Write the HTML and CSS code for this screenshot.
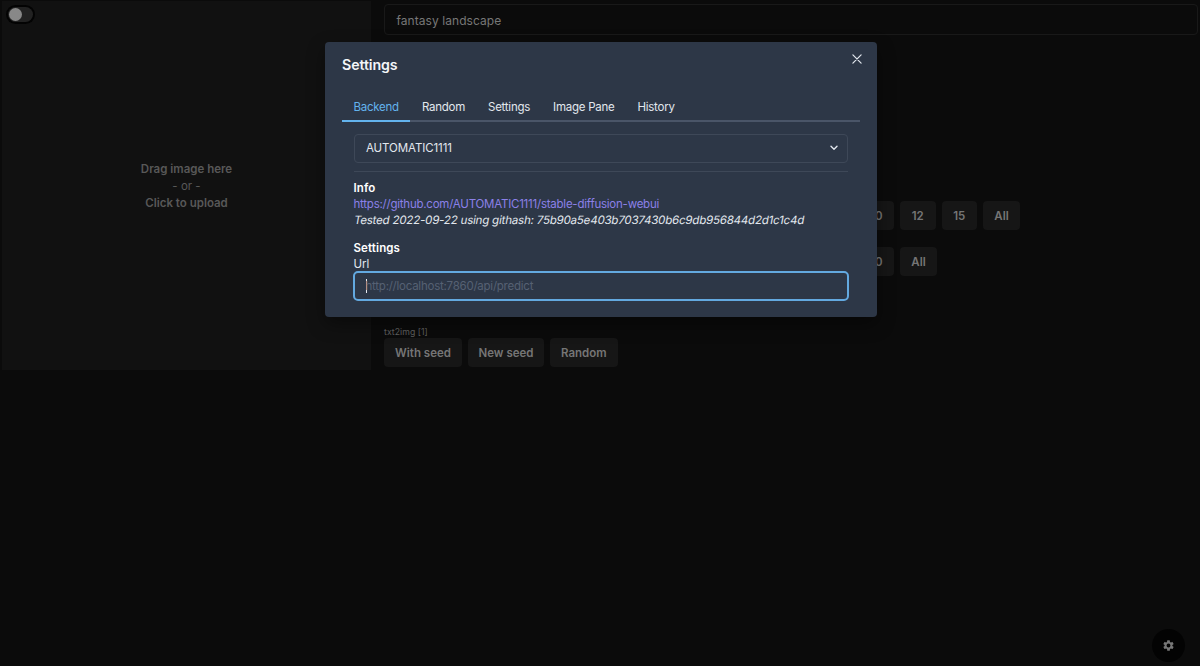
FILE: index.html
```html
<!DOCTYPE html>
<html lang="en">
<head>
<meta charset="utf-8">
<title>Settings</title>
<link rel="stylesheet" href="styles.css">
</head>
<body>
<div class="app">
  <section class="dropzone">
    <div class="switch"><span class="track"><span class="thumb"></span></span></div>
    <strong>Drag image here</strong>
    <span class="or">- or -</span>
    <strong>Click to upload</strong>
  </section>
  <main class="controls">
    <div class="prompt">fantasy landscape</div>
    <div class="row row-steps"><button class="btn num">10</button><button class="btn num">12</button><button class="btn num">15</button><button class="btn all">All</button></div>
    <div class="row row-scale"><button class="btn num">10</button><button class="btn all">All</button></div>
    <div class="caption">txt2img [1]</div>
    <div class="row row-run"><button class="btn seed">With seed</button><button class="btn new">New seed</button><button class="btn rand">Random</button></div>
  </main>
</div>
<div class="gear">
  <svg viewBox="0 0 24 24" width="13" height="13"><path fill="currentColor" d="M19.14 12.94c.04-.3.06-.61.06-.94s-.02-.64-.07-.94l2.03-1.58a.49.49 0 0 0 .12-.61l-1.92-3.32a.49.49 0 0 0-.59-.22l-2.39.96a7 7 0 0 0-1.62-.94l-.36-2.54a.48.48 0 0 0-.48-.41h-3.84a.48.48 0 0 0-.47.41l-.36 2.54c-.59.24-1.13.57-1.62.94l-2.39-.96a.48.48 0 0 0-.59.22L2.74 8.87a.48.48 0 0 0 .12.61l2.03 1.58a6 6 0 0 0 0 1.88l-2.03 1.58a.49.49 0 0 0-.12.61l1.92 3.32c.12.22.37.29.59.22l2.39-.96c.5.38 1.03.7 1.62.94l.36 2.54c.05.24.24.41.48.41h3.84c.24 0 .44-.17.47-.41l.36-2.54c.59-.24 1.13-.56 1.62-.94l2.39.96c.22.08.47 0 .59-.22l1.92-3.32a.48.48 0 0 0-.12-.61zM12 15.6a3.6 3.6 0 1 1 0-7.2 3.6 3.6 0 0 1 0 7.2z"/></svg>
</div>
<div class="modal">
  <header class="modal-head">
    <h1>Settings</h1>
    <svg class="close" viewBox="0 0 10 10" width="10" height="10"><path d="M.9.9l8.2 8.2M9.1.9L.9 9.1" stroke="currentColor" stroke-width="1.2" stroke-linecap="round"/></svg>
  </header>
  <nav class="tabs">
    <span class="tab active">Backend</span><span class="tab">Random</span><span class="tab">Settings</span><span class="tab">Image Pane</span><span class="tab">History</span>
  </nav>
  <div class="panel">
    <div class="select"><span>AUTOMATIC1111</span><svg viewBox="0 0 8 6" width="8" height="6"><path d="M1 1.3l3 3 3-3" fill="none" stroke="currentColor" stroke-width="1.4" stroke-linecap="round" stroke-linejoin="round"/></svg></div>
    <hr class="divider">
    <h2>Info</h2>
    <a class="link">https://github.com/AUTOMATIC1111/stable-diffusion-webui</a>
    <em class="tested">Tested 2022-09-22 using githash: 75b90a5e403b7037430b6c9db956844d2d1c1c4d</em>
    <h2 class="second">Settings</h2>
    <label class="label">Url</label>
    <div class="input"><span class="caret"></span><span>http://localhost:7860/api/predict</span></div>
  </div>
</div>
</body>
</html>
```
FILE: styles.css
```css
* { box-sizing: border-box; }
body {
  margin: 0;
  width: 1200px;
  height: 666px;
  overflow: hidden;
  background: #0b0b0b;
  color: #707070;
  font: 11.5px/17px Inter, "Liberation Sans", sans-serif;
}
.app { display: flex; gap: 13px; padding: 1px 2px; }
.dropzone {
  position: relative;
  width: 369px;
  height: 369px;
  padding-top: 2px;
  flex: none;
  display: flex;
  flex-direction: column;
  align-items: center;
  justify-content: center;
  background: #111;
  color: #585858;
}
.dropzone strong { font-weight: 600; }
.dropzone .or { line-height: 17px; }
.switch {
  position: absolute;
  left: 4px;
  top: 4px;
  padding: 2px;
  border-radius: 10px;
  background: #030303;
}
.track { display: flex; width: 25px; height: 15px; padding: 1px; border-radius: 8px; background: #222; }
.thumb { width: 13px; height: 13px; border-radius: 50%; background: #888; }
.controls { flex: 1; padding-top: 3px; }
.prompt {
  height: 31px;
  padding: 0 11.5px;
  border: 1px solid #191919;
  border-radius: 4px;
  color: #777;
  font-size: 12px;
  letter-spacing: .06px;
  line-height: 31px;
}
.row { display: flex; gap: 6px; }
.row-steps { margin: 166px 0 17px 474.5px; }
.row-scale { margin: 0 0 49px 474.5px; }
.btn {
  height: 29px;
  padding: 1px 0 0;
  border: 0;
  border-radius: 4px;
  background: #161616;
  color: #757575;
  font: 600 11.5px/28px Inter, sans-serif;
}
.num { width: 35.5px; }
.all { width: 37px; }
.seed { width: 78px; }
.new { width: 76px; }
.rand { width: 67.5px; }
.row-run .btn { padding-top: 0; }
.caption { height: 13px; color: #606060; font-size: 8.7px; letter-spacing: .05px; line-height: 14px; }
.gear {
  position: absolute;
  left: 1152px;
  top: 629px;
  width: 33px;
  height: 33px;
  display: grid;
  place-items: center;
  border-radius: 50%;
  background: #030303;
  color: #777;
}
.gear svg { display: block; }
.modal {
  position: absolute;
  left: 325px;
  top: 41.5px;
  width: 552px;
  height: 275.5px;
  padding: 0 17px;
  border-radius: 4px;
  background: #2d3747;
  box-shadow: 0 7px 18px rgba(0, 0, 0, .4);
  color: #e2e7ee;
}
.modal-head { display: flex; justify-content: space-between; padding-top: 12px; height: 50.5px; }
h1 { margin: 0; font-size: 14.2px; font-weight: 600; letter-spacing: -.1px; line-height: 21.5px; color: #f4f6f9; }
.close { display: block; margin: .5px -2px 0 0; }
.tabs { display: flex; height: 30px; border-bottom: 2px solid #4a5568; letter-spacing: -.25px; }
.tab { padding: 0 11.5px; height: 30px; line-height: 30px; }
.tab.active { color: #63b3ed; border-bottom: 2px solid #63b3ed; }
.panel { display: flex; flex-direction: column; padding: 11.5px 12px 0 11.5px; }
.select {
  height: 29px;
  display: flex;
  align-items: center;
  justify-content: space-between;
  padding: 0 9.5px 0 11.5px;
  border: 1px solid #3e4858;
  border-radius: 4px;
  letter-spacing: -.1px;
}
.divider { width: 100%; height: 1px; margin: 8px 0 8px; border: 0; background: #3e4858; }
h2 { margin: 0; font-size: 11.5px; font-weight: 600; letter-spacing: .12px; line-height: 17px; color: #fff; }
.link { line-height: 14.5px; letter-spacing: -.23px; color: #8b80e8; }
/* Slanted upright letterforms keep the two-storey "a" */
.tested {
  align-self: flex-start;
  font-style: normal;
  transform: skewX(-10deg);
  line-height: 19px;
  letter-spacing: -.19px;
  color: #e2e7ee;
  white-space: nowrap;
}
.second { margin-top: 9.5px; }
.label { line-height: 14px; }
.input {
  height: 30px;
  margin: 0 -1px;
  display: flex;
  align-items: center;
  padding: 1px 0 0 11px;
  border: 2px solid #63a9e0;
  border-radius: 5px;
  color: #566173;
  letter-spacing: -.24px;
}
.caret { width: 1px; height: 14px; background: #e6eaf0; margin-right: -1px; }
```
